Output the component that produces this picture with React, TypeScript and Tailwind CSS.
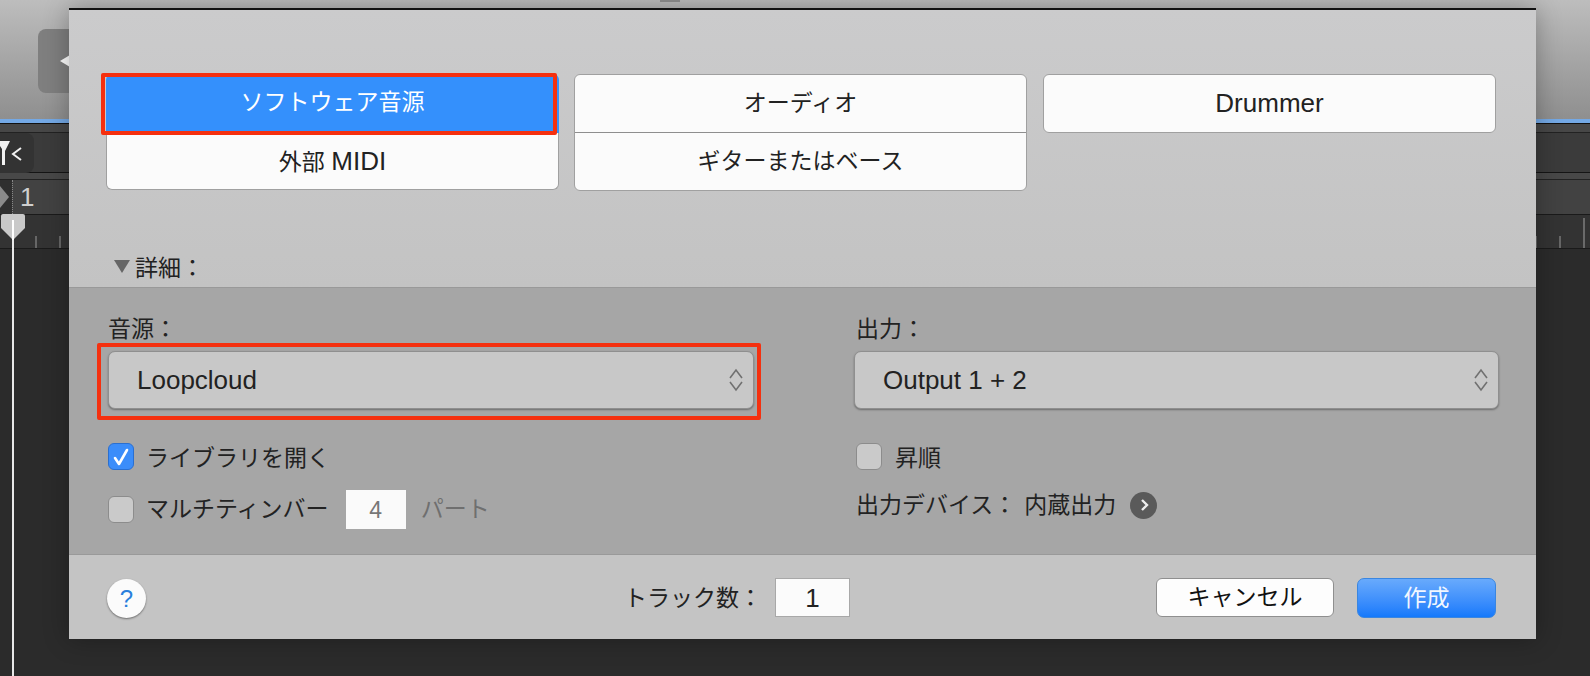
import React from 'react';

const font = { fontFamily: '"Liberation Sans", "Noto Sans CJK JP", sans-serif' };

const Chevrons = () => (
  <svg width="14" height="24" viewBox="0 0 14 24" fill="none" stroke="#707070" strokeWidth="1.6" className="shrink-0">
    <path d="M1 10 7 2l6 8" />
    <path d="M1 14l6 8 6-8" />
  </svg>
);

const Select = ({ value }: { value: string }) => (
  <div className="flex h-[58px] items-center justify-between rounded-[7px] border border-[#8f8f8f] bg-[#c8c8c8] pl-[28px] pr-[10px] text-[26px] text-[#222] shadow-[0_1px_2px_rgba(0,0,0,0.35)]">
    <span>{value}</span>
    <Chevrons />
  </div>
);

const Checkbox = ({ checked }: { checked?: boolean }) =>
  checked ? (
    <div className="flex h-[27px] w-[26px] shrink-0 items-center justify-center rounded-[6px] border border-[#2a6fd0] bg-[#3b8dfa]">
      <svg width="20" height="20" viewBox="0 0 20 20" fill="none" stroke="#fff" strokeWidth="2.6" strokeLinecap="round" strokeLinejoin="round">
        <path d="M4 11l4 6 8-14" />
      </svg>
    </div>
  ) : (
    <div className="h-[27px] w-[26px] shrink-0 rounded-[6px] border border-[#8c8c8c] bg-[#cacaca]" />
  );

const Tick = ({ tall }: { tall?: boolean }) => (
  <div className={tall ? 'h-[30px] w-[2px] bg-[#6a6a6a]' : 'h-[12px] w-[2px] bg-[#666]'} />
);

export default function App() {
  return (
    <div className="relative h-[676px] w-[1590px] overflow-hidden bg-[#2b2b2b]" style={font}>
      {/* arrange window behind the dialog */}
      <div className="h-[119px] bg-gradient-to-b from-[#bdbdbd] to-[#8f8f8f] pl-[38px] pt-[29px]">
        <div className="relative h-[64px] w-[60px] rounded-[8px] bg-[#7f7f7f]">
          <div className="absolute left-[22px] top-[26px] h-0 w-0 border-y-[6px] border-r-[10px] border-y-transparent border-r-white" />
        </div>
      </div>
      <div className="h-[4px] bg-[#74a9e6]" />
      <div className="h-[10px] border-y border-y-[#111] border-b-[#222] bg-[#474747]" />
      <div className="flex h-[40px] items-center border-b border-[#151515] bg-[#3b3b3b]">
        <div className="flex h-[40px] w-[34px] items-center rounded-r-[8px] bg-[#333]">
          <svg width="24" height="28" viewBox="0 0 24 28" fill="none">
            <path d="M0 2h10L5 12v14H2V10L0 7z" fill="#f2f2f2" />
            <path d="M21 9l-8 6 8 6" stroke="#f2f2f2" strokeWidth="2" />
          </svg>
        </div>
      </div>
      <div className="h-[7px] border-b border-[#222] bg-[#484848]" />
      <div className="flex h-[34px] items-center bg-[#424242]">
        <div className="flex h-full w-[12px] items-center bg-[#2f2f2f]">
          <div className="h-[22px] w-[9px] bg-[#8a8a8a] [clip-path:polygon(0_0,100%_50%,0_100%)]" />
        </div>
        <div className="h-full w-0 border-l border-dotted border-[#888]" />
        <span className="ml-[7px] text-[26px] text-[#cfcfcf]">1</span>
      </div>
      <div className="flex h-[35px] items-end justify-between border-y border-y-[#1a1a1a] bg-[#333] pl-[35px] pr-[5px]">
        <div className="flex gap-[22px]">
          <Tick />
          <Tick />
        </div>
        <div className="flex items-end gap-[22px]">
          <Tick />
          <Tick />
          <Tick tall />
        </div>
      </div>

      {/* playhead */}
      <div className="absolute left-[12px] top-[214px] h-[462px] w-[2px] bg-[#e8e8e8]" />
      <svg className="absolute left-[1px] top-[214px]" width="24" height="26" viewBox="0 0 24 26">
        <path d="M2 0h20a2 2 0 0 1 2 2v12L12 26 0 14V2a2 2 0 0 1 2-2z" fill="#c9c9c9" />
        <rect x="11" y="6" width="2" height="20" fill="#fff" />
      </svg>

      {/* top sliver of the window behind */}
      <div className="absolute left-[660px] top-0 h-[2px] w-[20px] bg-[#8f8f8f]" />

      {/* new track dialog */}
      <div className="absolute left-[69px] top-[8px] w-[1467px] border-t-2 border-[#111] text-[#222] shadow-[0_0_24px_rgba(0,0,0,0.3)]">
        <div className="h-[277px] bg-gradient-to-b from-[#cbcbcc] to-[#c3c3c3] pl-[37px] pt-[64px]">
          <div className="flex items-start gap-[15px] text-[23px]">
            <div className="relative w-[453px]">
              <div className="flex h-[59px] items-center justify-center rounded-t-[6px] bg-[#3490fc] pb-[2px] text-white">
                ソフトウェア音源
              </div>
              <div className="flex h-[57px] items-center justify-center rounded-b-[6px] border border-t-0 border-[#a0a0a0] bg-[#fbfbfb]">
                <span>外部 <span className="text-[26px]">MIDI</span></span>
              </div>
              <div className="absolute -left-[5px] -top-[1px] h-[62px] w-[456px] rounded-[2px] border-[4px] border-[#f5300f]" />
            </div>
            <div className="w-[453px] rounded-[6px] border border-[#a0a0a0] bg-[#fbfbfb]">
              <div className="flex h-[58px] items-center justify-center border-b border-[#8e8e8e]">オーディオ</div>
              <div className="flex h-[57px] items-center justify-center">ギターまたはベース</div>
            </div>
            <div className="ml-[1px] flex h-[59px] w-[453px] items-center justify-center rounded-[6px] border border-[#a0a0a0] bg-[#fbfbfb] text-[26px]">
              Drummer
            </div>
          </div>
          <div className="mt-[60px] flex h-[30px] items-center pl-[8px] text-[23px]">
            <div className="h-0 w-0 border-x-[8px] border-t-[13px] border-x-transparent border-t-[#666]" />
            <span className="ml-[5px] pt-[4px]">詳細：</span>
          </div>
        </div>

        <div className="h-[267px] border-t border-[#999] bg-[#a6a6a6] pl-[39px] pr-[37px] pt-[27px] text-[23px]">
          <div className="flex gap-[100px]">
            <div className="relative w-[646px]">
              <div className="mb-[6px] h-[30px] leading-[28px]">音源：</div>
              <Select value="Loopcloud" />
              <div className="absolute -left-[11px] top-[28px] h-[77px] w-[664px] rounded-[2px] border-[4px] border-[#f5300f]" />
              <div className="mt-[34px] flex h-[27px] items-center gap-[12px]">
                <Checkbox checked />
                <span className="pt-[3px]">ライブラリを開く</span>
              </div>
              <div className="mt-[20px] flex h-[39px] items-center">
                <Checkbox />
                <span className="ml-[12px]">マルチティンバー</span>
                <div className="ml-[17px] flex h-[39px] w-[60px] items-center justify-center bg-[#fafafa] pt-[2px] text-[#777]">4</div>
                <span className="ml-[15px] text-[#6f6f6f]">パート</span>
              </div>
            </div>
            <div className="w-[645px]">
              <div className="mb-[6px] h-[30px] pl-[2px] leading-[28px]">出力：</div>
              <Select value="Output 1 + 2" />
              <div className="mt-[34px] flex h-[27px] items-center gap-[13px] pl-[2px]">
                <Checkbox />
                <span className="pt-[3px]">昇順</span>
              </div>
              <div className="mt-[20px] flex h-[30px] items-center pl-[2px]">
                <span>出力デバイス：</span>
                <span className="ml-[8px]">内蔵出力</span>
                <div className="ml-[14px] flex h-[27px] w-[27px] items-center justify-center rounded-full bg-[#5a5a5a]">
                  <svg width="12" height="14" viewBox="0 0 12 14" fill="none" stroke="#eee" strokeWidth="2.4">
                    <path d="M4 2l5 5-5 5" />
                  </svg>
                </div>
              </div>
            </div>
          </div>
        </div>

        <div className="flex h-[85px] items-start border-t border-[#999] border-b-[#666] bg-[#c4c4c4] pl-[38px] pt-[23px] text-[23px]">
          <div className="mt-[1px] flex h-[39px] w-[39px] items-center justify-center rounded-full bg-[#fbfbfb] text-[24px] text-[#2a7fdc] shadow-[0_1px_2px_rgba(0,0,0,0.45)]">
            ?
          </div>
          <div className="ml-[478px] flex h-[39px] w-[131px] items-center whitespace-nowrap pt-[2px]">トラック数：</div>
          <div className="ml-[20px] flex h-[39px] w-[75px] items-center justify-center border border-[#a8a8a8] bg-[#fbfbfb] pt-[2px] text-[26px]">1</div>
          <div className="ml-[306px] flex h-[39px] w-[178px] items-center justify-center rounded-[6px] border border-[#8f8f8f] bg-[#fdfdfd] text-[#111]">
            キャンセル
          </div>
          <div className="ml-[23px] flex h-[40px] w-[139px] items-center justify-center rounded-[7px] border border-[#3a86e0] bg-gradient-to-b from-[#68aafc] to-[#1379fb] text-[#f2f7ff]">
            作成
          </div>
        </div>
      </div>
    </div>
  );
}
